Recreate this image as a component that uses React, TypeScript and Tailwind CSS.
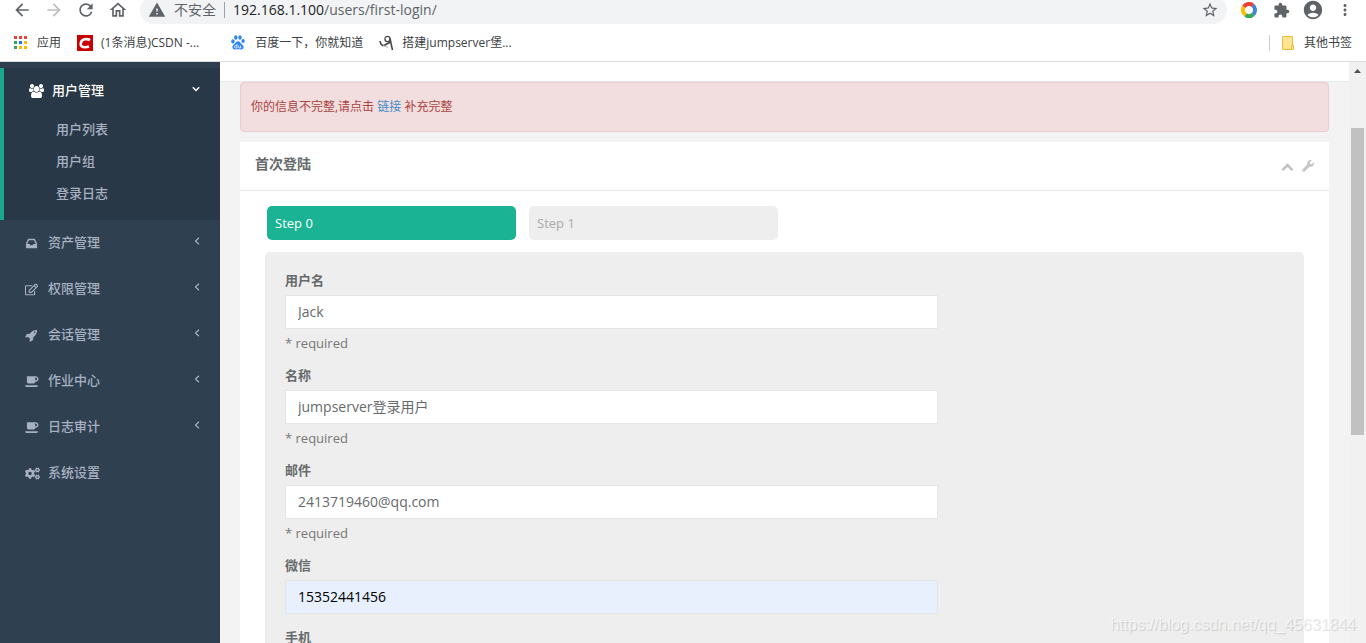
import React from "react";
import { FaCogs, FaRegEdit, FaWrench } from "react-icons/fa";
import {
  MdAccountCircle,
  MdArrowBack,
  MdArrowForward,
  MdExtension,
  MdMoreVert,
  MdOutlineHome,
  MdRefresh,
  MdStarBorder,
  MdWarning,
} from "react-icons/md";

interface MenuItem {
  name: string;
  icon: React.ReactNode;
  hasChildren: boolean;
}

interface Field {
  id: string;
  label: string;
  value: string;
  required?: boolean;
  autofilled?: boolean;
}

const UsersIcon: React.FC = () => (
  <svg width="15" height="14" viewBox="0 0 1920 1792" fill="currentColor">
    <path d="M593 896q-162 5-265 128h-134q-82 0-138-40.5t-56-118.5q0-353 124-353 6 0 43.500 21t97.500 42.500 119 21.500q67 0 133-23-5 37-5 66 0 139 81 256zm1071 637q0 120-73 189.500t-194 69.500h-874q-121 0-194-69.500t-73-189.500q0-53 3.500-103.500t14-109 26.500-108.500 43-97.500 62-81 85.500-53.500 111.500-20q10 0 43 21.500t73 48 107 48 135 21.500 135-21.500 107-48 73-48 43-21.500q61 0 111.500 20t85.500 53.500 62 81 43 97.500 26.500 108.500 14 109 3.500 103.500zm-1024-1277q0 106-75 181t-181 75-181-75-75-181 75-181 181-75 181 75 75 181zm704 384q0 159-112.500 271.500t-271.500 112.500-271.500-112.500-112.500-271.500 112.500-271.500 271.500-112.500 271.500 112.500 112.500 271.500zm576 225q0 78-56 118.500t-138 40.500h-134q-103-123-265-128 81-117 81-256 0-29-5-66 66 23 133 23 59 0 119-21.500t97.500-42.500 43.500-21q124 0 124 353zm-128-609q0 106-75 181t-181 75-181-75-75-181 75-181 181-75 181 75 75 181z" />
  </svg>
);

const InboxIcon: React.FC = () => (
  <svg width="13" height="13" viewBox="0 0 1792 1792" fill="currentColor">
    <path d="M1151 960h316q-1-3-2.500-8.500t-2.500-7.500l-212-496h-708l-212 496q-1 3-2.500 8.500t-2.500 7.500h316l95 192h320zm513 30v482q0 26-19 45t-45 19h-1408q-26 0-45-19t-19-45v-482q0-62 25-123l238-552q10-25 36.500-42t52.500-17h832q26 0 52.500 17t36.500 42l238 552q25 61 25 123z" />
  </svg>
);

const RocketIcon: React.FC = () => (
  <svg width="13" height="13" viewBox="0 0 1792 1792" fill="currentColor">
    <path d="M1440 448q0-40-28-68t-68-28-68 28-28 68 28 68 68 28 68-28 28-68zm224-288q0 249-75.500 430.500t-253.500 360.500q-81 80-195 176l-20 379q-2 16-16 26l-384 224q-7 4-16 4-12 0-23-9l-64-64q-13-14-8-32l85-276-281-281-276 85q-3 1-9 1-14 0-23-9l-64-64q-17-19-5-39l224-384q10-14 26-16l379-20q96-114 176-195 188-187 358-258t431-71q14 0 24 9.500t10 22.500z" />
  </svg>
);

const CoffeeIcon: React.FC = () => (
  <svg width="14" height="13" viewBox="0 0 1920 1792" fill="currentColor">
    <path d="M1664 544q0-80-56-136t-136-56h-64v384h64q80 0 136-56t56-136zm-1664 864h1792q0 106-75 181t-181 75h-1280q-106 0-181-75t-75-181zm1856-864q0 159-112.500 271.500t-271.500 112.500h-64v32q0 92-66 158t-158 66h-704q-92 0-158-66t-66-158v-736q0-26 19-45t45-19h1152q159 0 271.500 112.500t112.500 271.500z" />
  </svg>
);

const ChevronUpIcon: React.FC = () => (
  <svg width="13" height="13" viewBox="0 0 1792 1792" fill="currentColor">
    <path d="M1683 1331l-166 165q-19 19-45 19t-45-19l-531-531-531 531q-19 19-45 19t-45-19l-166-165q-19-19-19-45.500t19-45.500l742-741q19-19 45-19t45 19l742 741q19 19 19 45.500t-19 45.500z" />
  </svg>
);

const AngleLeftIcon: React.FC = () => (
  <svg width="6" height="8" viewBox="0 0 6 8" className="mb-1 ml-auto" fill="none" stroke="currentColor">
    <path d="M5 .8L1.500 4L5 7.200" strokeWidth="1.200" />
  </svg>
);

const AngleDownIcon: React.FC = () => (
  <svg width="8" height="6" viewBox="0 0 8 6" className="mb-1 ml-auto" fill="none" stroke="currentColor">
    <path d="M.8 1.200L4 4.500L7.200 1.200" strokeWidth="1.400" />
  </svg>
);

const subMenu: string[] = ["用户列表", "用户组", "登录日志"];

const menuItems: MenuItem[] = [
  { name: "资产管理", icon: <InboxIcon />, hasChildren: true },
  { name: "权限管理", icon: <FaRegEdit size={13} />, hasChildren: true },
  { name: "会话管理", icon: <RocketIcon />, hasChildren: true },
  { name: "作业中心", icon: <CoffeeIcon />, hasChildren: true },
  { name: "日志审计", icon: <CoffeeIcon />, hasChildren: true },
  { name: "系统设置", icon: <FaCogs size={15} />, hasChildren: false },
];

const fields: Field[] = [
  { id: "username", label: "用户名", value: "Jack", required: true },
  { id: "name", label: "名称", value: "jumpserver登录用户", required: true },
  { id: "email", label: "邮件", value: "2413719460@qq.com", required: true },
  { id: "wechat", label: "微信", value: "15352441456", autofilled: true },
  { id: "phone", label: "手机", value: "" },
];

const AppsIcon: React.FC = () => {
  const colors = [
    "#ea4335", "#ea4335", "#ea4335",
    "#34a853", "#1a73e8", "#fbbc04",
    "#34a853", "#fbbc04", "#fbbc04",
  ];
  return (
    <svg width="13" height="13" viewBox="0 0 13 13">
      {colors.map((color, i) => (
        <rect key={i} x={(i % 3) * 5} y={Math.floor(i / 3) * 5} width="3" height="3" fill={color} />
      ))}
    </svg>
  );
};

const CsdnIcon: React.FC = () => (
  <svg width="16" height="16" viewBox="0 0 16 16">
    <rect width="16" height="16" fill="#c80000" />
    <path
      d="M13 5.2C11.5 4.2 9.5 3.9 7.6 4.3C5.2 4.8 3.9 6.5 3.7 8.6C3.5 11 5.2 12.2 7.6 12.2C9.4 12.2 10.8 12 12 11.5"
      fill="none"
      stroke="#fff"
      strokeWidth="2.6"
    />
  </svg>
);

const BaiduIcon: React.FC = () => (
  <svg width="14" height="15" viewBox="0 0 14 15" fill="#2f86f6">
    <ellipse cx="1.9" cy="6.4" rx="1.7" ry="2.1" />
    <ellipse cx="4.8" cy="2.5" rx="1.7" ry="2.2" />
    <ellipse cx="9" cy="2.5" rx="1.7" ry="2.2" />
    <ellipse cx="12.1" cy="6" rx="1.7" ry="2.1" />
    <path d="M7 6.2c1.600 0 2.200 1.300 3.100 2.300 1 1 2.600 1.900 2.500 3.800-.1 1.700-1.400 2.400-2.900 2.300-1-.1-1.800-.3-2.700-.3s-1.700.2-2.700.3c-1.500.1-2.800-.6-2.900-2.300-.1-1.900 1.500-2.800 2.500-3.800C4.800 7.500 5.400 6.200 7 6.200z" />
    <path d="M5.900 9v4H4.700a1.200 1.200 0 0 1 0-2.400h1.200M7.600 10.500v1.700q0 .8.8.8h1.200v-2.500" fill="none" stroke="#fff" strokeWidth=".8" />
  </svg>
);

const SketchIcon: React.FC = () => (
  <svg width="15" height="16" viewBox="0 0 15 16" fill="none" stroke="#444" strokeWidth="1.200">
    <path d="M1 6C1.500 9.500 3.500 11.500 6 10L11.500 7" strokeWidth="1.600" />
    <circle cx="8.500" cy="4" r="2.600" />
    <path d="M11 3.500C11.800 7 12.500 11 13.500 15" strokeWidth="1.600" />
    <path d="M4 10.500L9 12.500" stroke="#bbb" />
  </svg>
);

const ColorRingIcon: React.FC = () => (
  <svg width="16" height="16" viewBox="0 0 16 16" fill="none" strokeWidth="4">
    <path d="M2.800 5A6 6 0 0 1 12 3.500" stroke="#ea4335" />
    <path d="M12 3.500A6 6 0 0 1 12 12.500" stroke="#4285d4" />
    <path d="M12 12.500A6 6 0 0 1 4.500 12.900" stroke="#34a853" />
    <path d="M4.500 12.900A6 6 0 0 1 2.800 5" stroke="#fbbc04" />
  </svg>
);

const FolderIcon: React.FC = () => (
  <svg width="12" height="14" viewBox="0 0 12 14">
    <path d="M.5.5h10v9h1v4H.5z" fill="#ffe591" stroke="#e8bf3c" />
    <path d="M9.500 13V9.500h1.500" fill="none" stroke="#e8bf3c" />
  </svg>
);

const BrowserBar: React.FC = () => (
  <header className="shrink-0 border-b border-[#dadce0] bg-white text-[#3c4043]">
    <div className="flex h-6 items-start pr-3 text-[#5f6368]">
      <div className="flex h-5 items-center gap-3 pl-3">
        <button type="button" aria-label="Back" className="flex w-5 justify-center">
          <MdArrowBack size={20} />
        </button>
        <button type="button" aria-label="Forward" className="flex w-5 justify-center text-[#bcbec0]">
          <MdArrowForward size={20} />
        </button>
        <button type="button" aria-label="Reload" className="flex w-5 justify-center">
          <MdRefresh size={20} />
        </button>
        <button type="button" aria-label="Home" className="flex w-5 justify-center">
          <MdOutlineHome size={20} />
        </button>
      </div>
      <div className="-mt-1 ml-3 flex h-7 flex-1 items-center rounded-full bg-[#f1f3f4] px-2">
        <MdWarning size={18} />
        <span className="ml-2 text-sm">不安全</span>
        <span className="mx-2 h-4 w-px bg-[#9aa0a6]" />
        <span className="text-sm">
          <span className="text-[#202124]">192.168.1.100</span>/users/first-login/
        </span>
        <button type="button" aria-label="Bookmark" className="ml-auto">
          <MdStarBorder size={18} />
        </button>
      </div>
      <div className="ml-3.5 flex h-5 items-center gap-4">
        <ColorRingIcon />
        <MdExtension size={17} />
        <MdAccountCircle size={22} className="-mx-1" />
        <button type="button" aria-label="More">
          <MdMoreVert size={18} />
        </button>
      </div>
    </div>
    <nav className="flex h-[37px] items-center px-3.5 text-xs">
      <a href="#" className="flex items-center gap-2.5">
        <AppsIcon />
        应用
      </a>
      <a href="#" className="ml-4 flex items-center gap-2">
        <CsdnIcon />
        (1条消息)CSDN -...
      </a>
      <a href="#" className="ml-8 flex items-center gap-2.5">
        <BaiduIcon />
        百度一下，你就知道
      </a>
      <a href="#" className="ml-4 flex items-center gap-2">
        <SketchIcon />
        搭建jumpserver堡...
      </a>
      <span className="ml-auto h-4 w-px bg-[#ccc]" />
      <a href="#" className="ml-3 flex items-center gap-2.5">
        <FolderIcon />
        其他书签
      </a>
    </nav>
  </header>
);

const Sidebar: React.FC = () => (
  <aside className="w-[220px] shrink-0 bg-[#2f4050] pt-1.5 font-medium text-[#a7b1c2]">
    <div className="border-l-4 border-[#19aa8d] bg-[#293846] pb-2.5">
      <a href="#" className="flex h-[46px] items-center pr-5 pl-[25px] text-white">
        <UsersIcon />
        <span className="ml-2">用户管理</span>
        <AngleDownIcon />
      </a>
      {subMenu.map((name) => (
        <a key={name} href="#" className="flex h-8 items-center pl-[52px]">
          {name}
        </a>
      ))}
    </div>
    {menuItems.map((item) => (
      <a key={item.name} href="#" className="flex h-[46px] items-center pr-5 pl-[25px]">
        <span className="w-[23px]">{item.icon}</span>
        {item.name}
        {item.hasChildren && <AngleLeftIcon />}
      </a>
    ))}
  </aside>
);

const FormField: React.FC<{ field: Field }> = ({ field }) => (
  <div className="mb-3.5">
    <label htmlFor={field.id} className="mb-1.5 block leading-[18px] font-bold">
      {field.label}
    </label>
    <input
      id={field.id}
      type="text"
      defaultValue={field.value}
      className={`block h-[34px] w-[653px] max-w-full border border-[#e5e6e7] px-3 pb-0.5 text-sm outline-none ${
        field.autofilled ? "bg-[#e8f0fe] text-black" : "bg-white text-[#676a6c]"
      }`}
    />
    {field.required && <p className="mt-[5px] leading-[18px] text-[#777]">* required</p>}
  </div>
);

const FirstLogin: React.FC = () => (
  <main className="min-w-0 flex-1 overflow-hidden bg-[#f3f3f4]">
    <div className="h-5 border-b border-[#e7eaec] bg-white" />
    <div className="px-5">
      <div className="mb-2.5 h-[50px] rounded border border-[#ebccd1] bg-[#f2dede] px-2.5 pt-3.5 text-xs leading-5 text-[#a94442]">
        你的信息不完整,请点击{" "}
        <a href="#" className="text-[#428bca]">
          链接
        </a>{" "}
        补充完整
      </div>
      <section className="bg-white">
        <div className="flex h-[49px] items-center justify-between border-b border-[#e7eaec] px-[15px]">
          <h5 className="mb-1 text-sm font-semibold">首次登陆</h5>
          <div className="flex items-center gap-2 text-[#c4c4c4]">
            <button type="button" aria-label="Collapse">
              <ChevronUpIcon />
            </button>
            <button type="button" aria-label="Settings">
              <FaWrench size={12} />
            </button>
          </div>
        </div>
        <div className="px-[25px] pt-[15px]">
          <div className="mb-3 flex gap-[13px] pl-0.5">
            <a href="#" className="h-[34px] w-[249px] rounded-[5px] bg-[#1ab394] px-2 leading-[34px] text-white">
              Step 0
            </a>
            <a href="#" className="h-[34px] w-[249px] rounded-[5px] bg-[#eee] px-2 leading-[34px] text-[#aaa]">
              Step 1
            </a>
          </div>
          <form className="rounded-[5px] bg-[#eee] px-5 pt-[19px]">
            {fields.map((field) => (
              <FormField key={field.id} field={field} />
            ))}
          </form>
        </div>
      </section>
    </div>
  </main>
);

const Scrollbar: React.FC = () => (
  <div className="flex w-[17px] shrink-0 flex-col items-center bg-[#f1f1f1]">
    <svg width="17" height="17" viewBox="0 0 17 17" className="mb-[49px]">
      <path d="M5 11L8.500 7L12 11z" fill="#505050" />
    </svg>
    <div className="h-[307px] w-[13px] bg-[#c1c1c1]" />
  </div>
);

const App: React.FC = () => {
  return (
    <div className="relative flex h-screen flex-col overflow-hidden font-['Open_Sans','Noto_Sans_CJK_SC',sans-serif] text-[13px] text-[#676a6c]">
      <BrowserBar />
      <div className="flex min-h-0 flex-1">
        <Sidebar />
        <FirstLogin />
        <Scrollbar />
      </div>
      <div className="pointer-events-none absolute right-2.5 bottom-1.5 font-['Liberation_Sans',sans-serif] text-base leading-6 text-white/60 [text-shadow:1px_1px_1px_rgba(0,0,0,0.15)]">
        https://blog.csdn.net/qq_45631844
      </div>
    </div>
  );
};

export default App;
